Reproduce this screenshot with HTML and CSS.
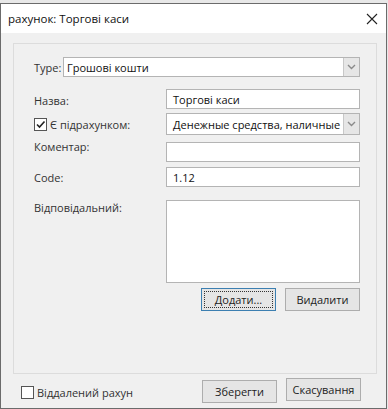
FILE: index.html
```html
<!DOCTYPE html>
<html lang="uk">
<head>
    <meta charset="UTF-8">
    <title>рахунок: Торгові каси</title>
    <link rel="stylesheet" href="styles.css">
</head>
<body>

<div class="window">
    <div class="titlebar">
        <span class="title">рахунок: Торгові каси</span>
        <svg class="close" width="12" height="12" viewBox="0 0 12 12">
            <path d="M1 1 L11 11 M11 1 L1 11" stroke="#222" stroke-width="1.1" fill="none"/>
        </svg>
    </div>

    <div class="content">
        <div class="group">
            <div class="type-row">
                <span class="type-label">Type:</span>
                <div class="combo type-combo">
                    <span class="combo-text">Грошові кошти</span>
                    <span class="combo-btn">
                        <svg width="9" height="6" viewBox="0 0 9 6"><path d="M1 1 L4.5 4.5 L8 1" stroke="#8a8a8a" stroke-width="1.4" fill="none"/></svg>
                    </span>
                </div>
            </div>

            <div class="row row-name">
                <span class="label lbl-name">Назва:</span>
                <div class="field edit">Торгові каси</div>
            </div>

            <div class="row row-sub">
                <label class="label lbl-sub">
                    <span class="check checked">
                        <svg width="11" height="11" viewBox="0 0 11 11"><path d="M2 5.5 L4.5 8 L9.5 2.5" stroke="#222" stroke-width="1.6" fill="none"/></svg>
                    </span>
                    Є підрахунком:
                </label>
                <div class="field combo">
                    <span class="combo-text">Денежные средства, наличные</span>
                    <span class="combo-btn">
                        <svg width="9" height="6" viewBox="0 0 9 6"><path d="M1 1 L4.5 4.5 L8 1" stroke="#8a8a8a" stroke-width="1.4" fill="none"/></svg>
                    </span>
                </div>
            </div>

            <div class="row row-comment">
                <span class="label lbl-comment">Коментар:</span>
                <div class="field edit"></div>
            </div>

            <div class="row row-code">
                <span class="label lbl-code">Code:</span>
                <div class="field edit">1.12</div>
            </div>

            <div class="row row-resp">
                <span class="label lbl-resp">Відповідальний:</span>
                <div class="field listbox"></div>
            </div>

            <div class="list-buttons">
                <button class="btn btn-focus"><span class="focus-ring">Додати...</span></button>
                <button class="btn">Видалити</button>
            </div>
        </div>

        <div class="footer">
            <label class="remote">
                <span class="check"></span>
                <span class="remote-text">Віддалений рахун</span>
            </label>
            <div class="footer-buttons">
                <button class="btn btn-save">Зберегти</button>
                <button class="btn btn-cancel">Скасування</button>
            </div>
        </div>
    </div>
</div>

</body>
</html>
```

FILE: styles.css
```css
body {
    margin: 0;
    padding: 3px 0 0 0;
    background-color: #e8e8e8;
    font-family: 'Open Sans', 'Noto Sans', sans-serif;
    font-size: 11px;
    color: #333;
}

.window {
    box-sizing: border-box;
    width: 387px;
    height: 406px;
    border: 1px solid #6b6b6b;
    background-color: #f0f0f0;
    display: flex;
    flex-direction: column;
}

.titlebar {
    height: 29px;
    background: white;
    display: flex;
    align-items: center;
    justify-content: space-between;
    padding: 0 8px 0 7px;
}

.title {
    color: #111;
    font-size: 11.5px;
}

.content {
    flex: 1;
    padding: 10px 9px 0 12px;
    display: flex;
    flex-direction: column;
}

.group {
    box-sizing: border-box;
    height: 331px;
    border: 1px solid #dcdcdc;
    padding: 13px 16px 0 20px;
}

.type-row {
    display: flex;
    align-items: center;
}

.type-label {
    width: 29px;
    flex-shrink: 0;
}

.combo {
    box-sizing: border-box;
    height: 20px;
    background: white;
    border: 1px solid #b4b4b4;
    display: flex;
    align-items: center;
    color: #111;
    min-width: 0;
}

.type-combo {
    flex: 1;
}

.combo-text {
    flex: 1;
    padding-left: 3px;
    white-space: nowrap;
    overflow: hidden;
}

.combo-btn {
    box-sizing: border-box;
    width: 16px;
    height: 100%;
    flex-shrink: 0;
    background: #e6e6e6;
    border-left: 1px solid #c8c8c8;
    display: flex;
    align-items: center;
    justify-content: center;
}

.row {
    display: flex;
    align-items: flex-start;
}

.label {
    width: 132px;
    flex-shrink: 0;
    display: flex;
    align-items: center;
}

.field {
    flex: 1;
    min-width: 0;
    box-sizing: border-box;
    height: 20px;
}

.edit {
    background: white;
    border: 1px solid #b4b4b4;
    padding: 2px 0 0 6px;
    color: #111;
}

.row-name { margin-top: 12px; }
.lbl-name { margin-top: 4px; }

.row-sub { margin-top: 4px; }
.row-sub .field { height: 22px; }
.row-sub .combo-text { padding-left: 6px; }
.lbl-sub { margin-top: 4px; }

.row-comment { margin-top: 7px; }
.lbl-comment { margin-top: -3px; }

.row-code { margin-top: 5px; }
.lbl-code { margin-top: 3px; }

.row-resp { margin-top: 13px; }
.lbl-resp { margin-top: 0; }

.listbox {
    height: 83px;
    background: white;
    border: 1px solid #b4b4b4;
}

.check {
    box-sizing: border-box;
    width: 13px;
    height: 13px;
    border: 1px solid #555;
    background: white;
    display: inline-flex;
    align-items: center;
    justify-content: center;
    margin-right: 3px;
}

.list-buttons {
    display: flex;
    justify-content: flex-end;
    gap: 9px;
    margin-top: 5px;
}

.btn {
    box-sizing: border-box;
    width: 75px;
    height: 23px;
    border: 1px solid #adadad;
    background: #e5e5e5;
    font-family: 'Open Sans', 'Noto Sans', sans-serif;
    font-size: 11px;
    color: #222;
    padding: 0;
}

.btn-focus {
    border-color: #3c7fb1;
    padding: 2px;
}

.focus-ring {
    display: flex;
    height: 100%;
    align-items: center;
    justify-content: center;
    border: 1px dotted #333;
    box-sizing: border-box;
}

.footer {
    display: flex;
    justify-content: space-between;
    align-items: center;
    margin-top: 4px;
    padding-right: 16px;
}

.remote {
    display: flex;
    align-items: center;
    margin-left: 8px;
    margin-top: 3px;
}

.remote-text {
    white-space: nowrap;
}

.footer-buttons {
    display: flex;
    gap: 9px;
    align-items: flex-start;
}

.btn-save { margin-top: 2px; }
```
